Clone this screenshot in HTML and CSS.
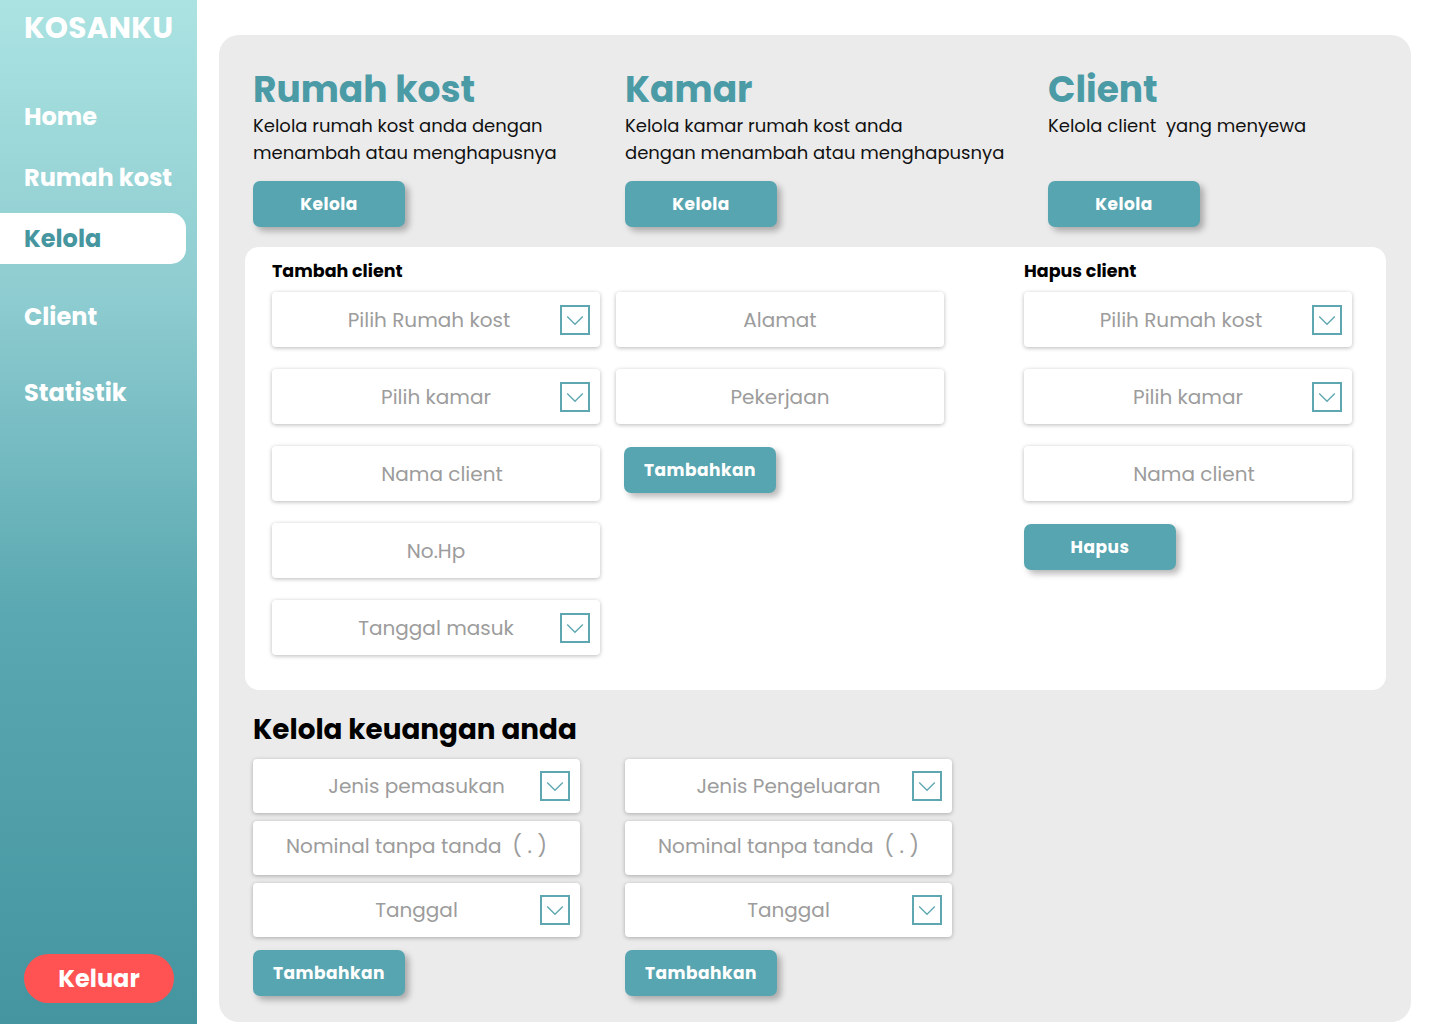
FILE: index.html
```html
<!DOCTYPE html>
<html lang="id">
<head>
<meta charset="utf-8">
<title>Kosanku - Kelola</title>
<link rel="stylesheet" href="styles.css">
</head>
<body>
<aside class="sidebar">
  <div class="logo">KOSANKU</div>
  <nav class="nav">
    <a class="nav-item">Home</a>
    <a class="nav-item">Rumah kost</a>
    <a class="nav-item active">Kelola</a>
    <a class="nav-item after-active">Client</a>
    <a class="nav-item spaced">Statistik</a>
  </nav>
  <button class="logout">Keluar</button>
</aside>

<main class="panel">
  <section class="intro">
    <div class="intro-col">
      <h2 class="intro-title">Rumah kost</h2>
      <p class="intro-text">Kelola rumah kost anda dengan<br>menambah atau menghapusnya</p>
      <button class="btn">Kelola</button>
    </div>
    <div class="intro-col">
      <h2 class="intro-title">Kamar</h2>
      <p class="intro-text">Kelola kamar rumah kost anda<br>dengan menambah atau menghapusnya</p>
      <button class="btn">Kelola</button>
    </div>
    <div class="intro-col">
      <h2 class="intro-title">Client</h2>
      <p class="intro-text">Kelola client&nbsp; yang menyewa</p>
      <button class="btn">Kelola</button>
    </div>
  </section>

  <section class="card">
    <div class="card-col">
      <h3 class="card-title">Tambah client</h3>
      <div class="field select"><span class="field-text nudge-l">Pilih Rumah kost</span><span class="drop"><svg viewBox="0 0 30 30"><polyline points="6,11 15,20 24,11"/></svg></span></div>
      <div class="field select"><span class="field-text">Pilih kamar</span><span class="drop"><svg viewBox="0 0 30 30"><polyline points="6,11 15,20 24,11"/></svg></span></div>
      <div class="field"><span class="field-text nudge-r">Nama client</span></div>
      <div class="field"><span class="field-text">No.Hp</span></div>
      <div class="field select"><span class="field-text">Tanggal masuk</span><span class="drop"><svg viewBox="0 0 30 30"><polyline points="6,11 15,20 24,11"/></svg></span></div>
    </div>
    <div class="card-col">
      <h3 class="card-title"></h3>
      <div class="field"><span class="field-text">Alamat</span></div>
      <div class="field"><span class="field-text">Pekerjaan</span></div>
      <button class="btn btn-inset">Tambahkan</button>
    </div>
    <div class="card-col card-col-right">
      <h3 class="card-title">Hapus client</h3>
      <div class="field select"><span class="field-text nudge-l">Pilih Rumah kost</span><span class="drop"><svg viewBox="0 0 30 30"><polyline points="6,11 15,20 24,11"/></svg></span></div>
      <div class="field select"><span class="field-text">Pilih kamar</span><span class="drop"><svg viewBox="0 0 30 30"><polyline points="6,11 15,20 24,11"/></svg></span></div>
      <div class="field"><span class="field-text nudge-r">Nama client</span></div>
      <button class="btn">Hapus</button>
    </div>
  </section>

  <section class="finance">
    <h2 class="finance-title">Kelola keuangan anda</h2>
    <div class="finance-grid">
      <div class="finance-col">
        <div class="field small select"><span class="field-text">Jenis pemasukan</span><span class="drop"><svg viewBox="0 0 30 30"><polyline points="6,11 15,20 24,11"/></svg></span></div>
        <div class="field small"><span class="field-text nominal">Nominal tanpa tanda&nbsp; <span class="paren">( . )</span></span></div>
        <div class="field small select"><span class="field-text">Tanggal</span><span class="drop"><svg viewBox="0 0 30 30"><polyline points="6,11 15,20 24,11"/></svg></span></div>
        <button class="btn btn-finance">Tambahkan</button>
      </div>
      <div class="finance-col">
        <div class="field small select"><span class="field-text">Jenis Pengeluaran</span><span class="drop"><svg viewBox="0 0 30 30"><polyline points="6,11 15,20 24,11"/></svg></span></div>
        <div class="field small"><span class="field-text nominal">Nominal tanpa tanda&nbsp; <span class="paren">( . )</span></span></div>
        <div class="field small select"><span class="field-text">Tanggal</span><span class="drop"><svg viewBox="0 0 30 30"><polyline points="6,11 15,20 24,11"/></svg></span></div>
        <button class="btn btn-finance">Tambahkan</button>
      </div>
    </div>
  </section>
</main>
</body>
</html>
```

FILE: styles.css
```css
* { box-sizing: border-box; }

html, body {
  margin: 0;
  padding: 0;
}

body {
  width: 1440px;
  height: 1024px;
  overflow: hidden;
  background: #ffffff;
  display: flex;
  align-items: flex-start;
  font-family: "Poppins", "Open Sans", "Noto Sans", sans-serif;
  color: #000;
}

/* Sidebar */
.sidebar {
  width: 197px;
  height: 1024px;
  flex: none;
  display: flex;
  flex-direction: column;
  background: linear-gradient(180deg, #abe3e2 0%, #8ccbcf 30%, #5aa8b1 60%, #4495a0 100%);
}

.logo {
  padding: 10px 0 0 24px;
  font-size: 29.5px;
  line-height: 36px;
  font-weight: 700;
  color: #ffffff;
  letter-spacing: 0.3px;
}

.nav {
  display: flex;
  flex-direction: column;
  gap: 10px;
  margin-top: 45px;
}

.nav-item {
  display: block;
  width: 186px;
  height: 51px;
  padding-left: 24px;
  font-size: 24px;
  line-height: 51px;
  font-weight: 700;
  color: #ffffff;
  border-radius: 0 15px 15px 0;
}

.nav-item.active {
  background: #ffffff;
  color: #45969f;
}

.nav-item.after-active {
  margin-top: 17px;
}

.nav-item.spaced {
  margin-top: 15px;
}

.logout {
  margin: auto 0 21px 24px;
  width: 150px;
  height: 49px;
  border: none;
  border-radius: 25px;
  background: #ff5353;
  color: #ffffff;
  font-family: inherit;
  font-size: 24px;
  font-weight: 700;
  padding: 0;
}

/* Main panel */
.panel {
  margin: 35px 0 0 22px;
  width: 1192px;
  height: 987px;
  flex: none;
  background: #ebebeb;
  border-radius: 20px;
  padding: 34px 25px 0 34px;
}

.intro {
  display: grid;
  grid-template-columns: 372px 423px 1fr;
}

.intro-title {
  margin: 0 0 1px;
  font-size: 36px;
  line-height: 42px;
  font-weight: 700;
  color: #4a9ba6;
}

.intro-text {
  margin: 0;
  min-height: 54px;
  font-size: 18px;
  line-height: 27px;
  color: #111;
  white-space: nowrap;
}

.btn {
  display: block;
  width: 152px;
  height: 46px;
  border: none;
  border-radius: 7px;
  background: #57a5b0;
  color: #ffffff;
  font-family: inherit;
  font-size: 17px;
  font-weight: 700;
  letter-spacing: 0.5px;
  padding: 0;
  box-shadow: 4px 4px 6px rgba(0, 0, 0, 0.28);
}

.intro .btn {
  margin-top: 15px;
}

/* White card */
.card {
  margin: 20px 0 0 -8px;
  background: #ffffff;
  border-radius: 14px;
  padding: 13px 0 35px 27px;
  display: flex;
}

.card-col {
  width: 328px;
  display: flex;
  flex-direction: column;
  gap: 22px;
}

.card-col + .card-col {
  margin-left: 16px;
}

.card-col-right.card-col {
  margin-left: 80px;
}

.card-title {
  margin: 0 0 -13px;
  height: 23px;
  font-size: 17.5px;
  line-height: 23px;
  font-weight: 700;
  color: #000;
}

.field {
  height: 55px;
  flex: none;
  background: #ffffff;
  border-radius: 4px;
  box-shadow: 0 1px 4px rgba(0, 0, 0, 0.28);
  display: grid;
  grid-template-columns: 44px 1fr 44px;
  align-items: center;
}

.field.small {
  height: 54px;
}

.field-text {
  grid-column: 2;
  text-align: center;
  font-size: 20px;
  line-height: 28px;
  color: #9c9c9c;
  white-space: nowrap;
}

.field-text.nudge-l {
  padding-right: 14px;
}

.field-text.nudge-r {
  padding-left: 12px;
}

.field-text.nominal {
  grid-column: 1 / 4;
  margin-bottom: 4px;
}

.paren {
  font-size: 21px;
  line-height: 20px;
}

.drop {
  grid-column: 3;
  justify-self: end;
  margin-right: 10px;
  width: 30px;
  height: 30px;
  border: 2px solid #5ea7b0;
  display: block;
}

.drop svg {
  display: block;
  width: 26px;
  height: 26px;
}

.drop polyline {
  fill: none;
  stroke: #5ea7b0;
  stroke-width: 1.5;
}

.btn-inset {
  margin: 1px 0 0 8px;
}

.card-col-right .btn {
  margin-top: 1px;
}

/* Finance */
.finance-title {
  margin: 24px 0 13px;
  font-size: 27.8px;
  line-height: 32px;
  font-weight: 700;
  color: #000;
}

.finance-grid {
  display: flex;
  gap: 45px;
}

.finance-col {
  width: 327px;
  display: flex;
  flex-direction: column;
  gap: 8px;
}

.btn-finance {
  margin-top: 5px;
}
```
